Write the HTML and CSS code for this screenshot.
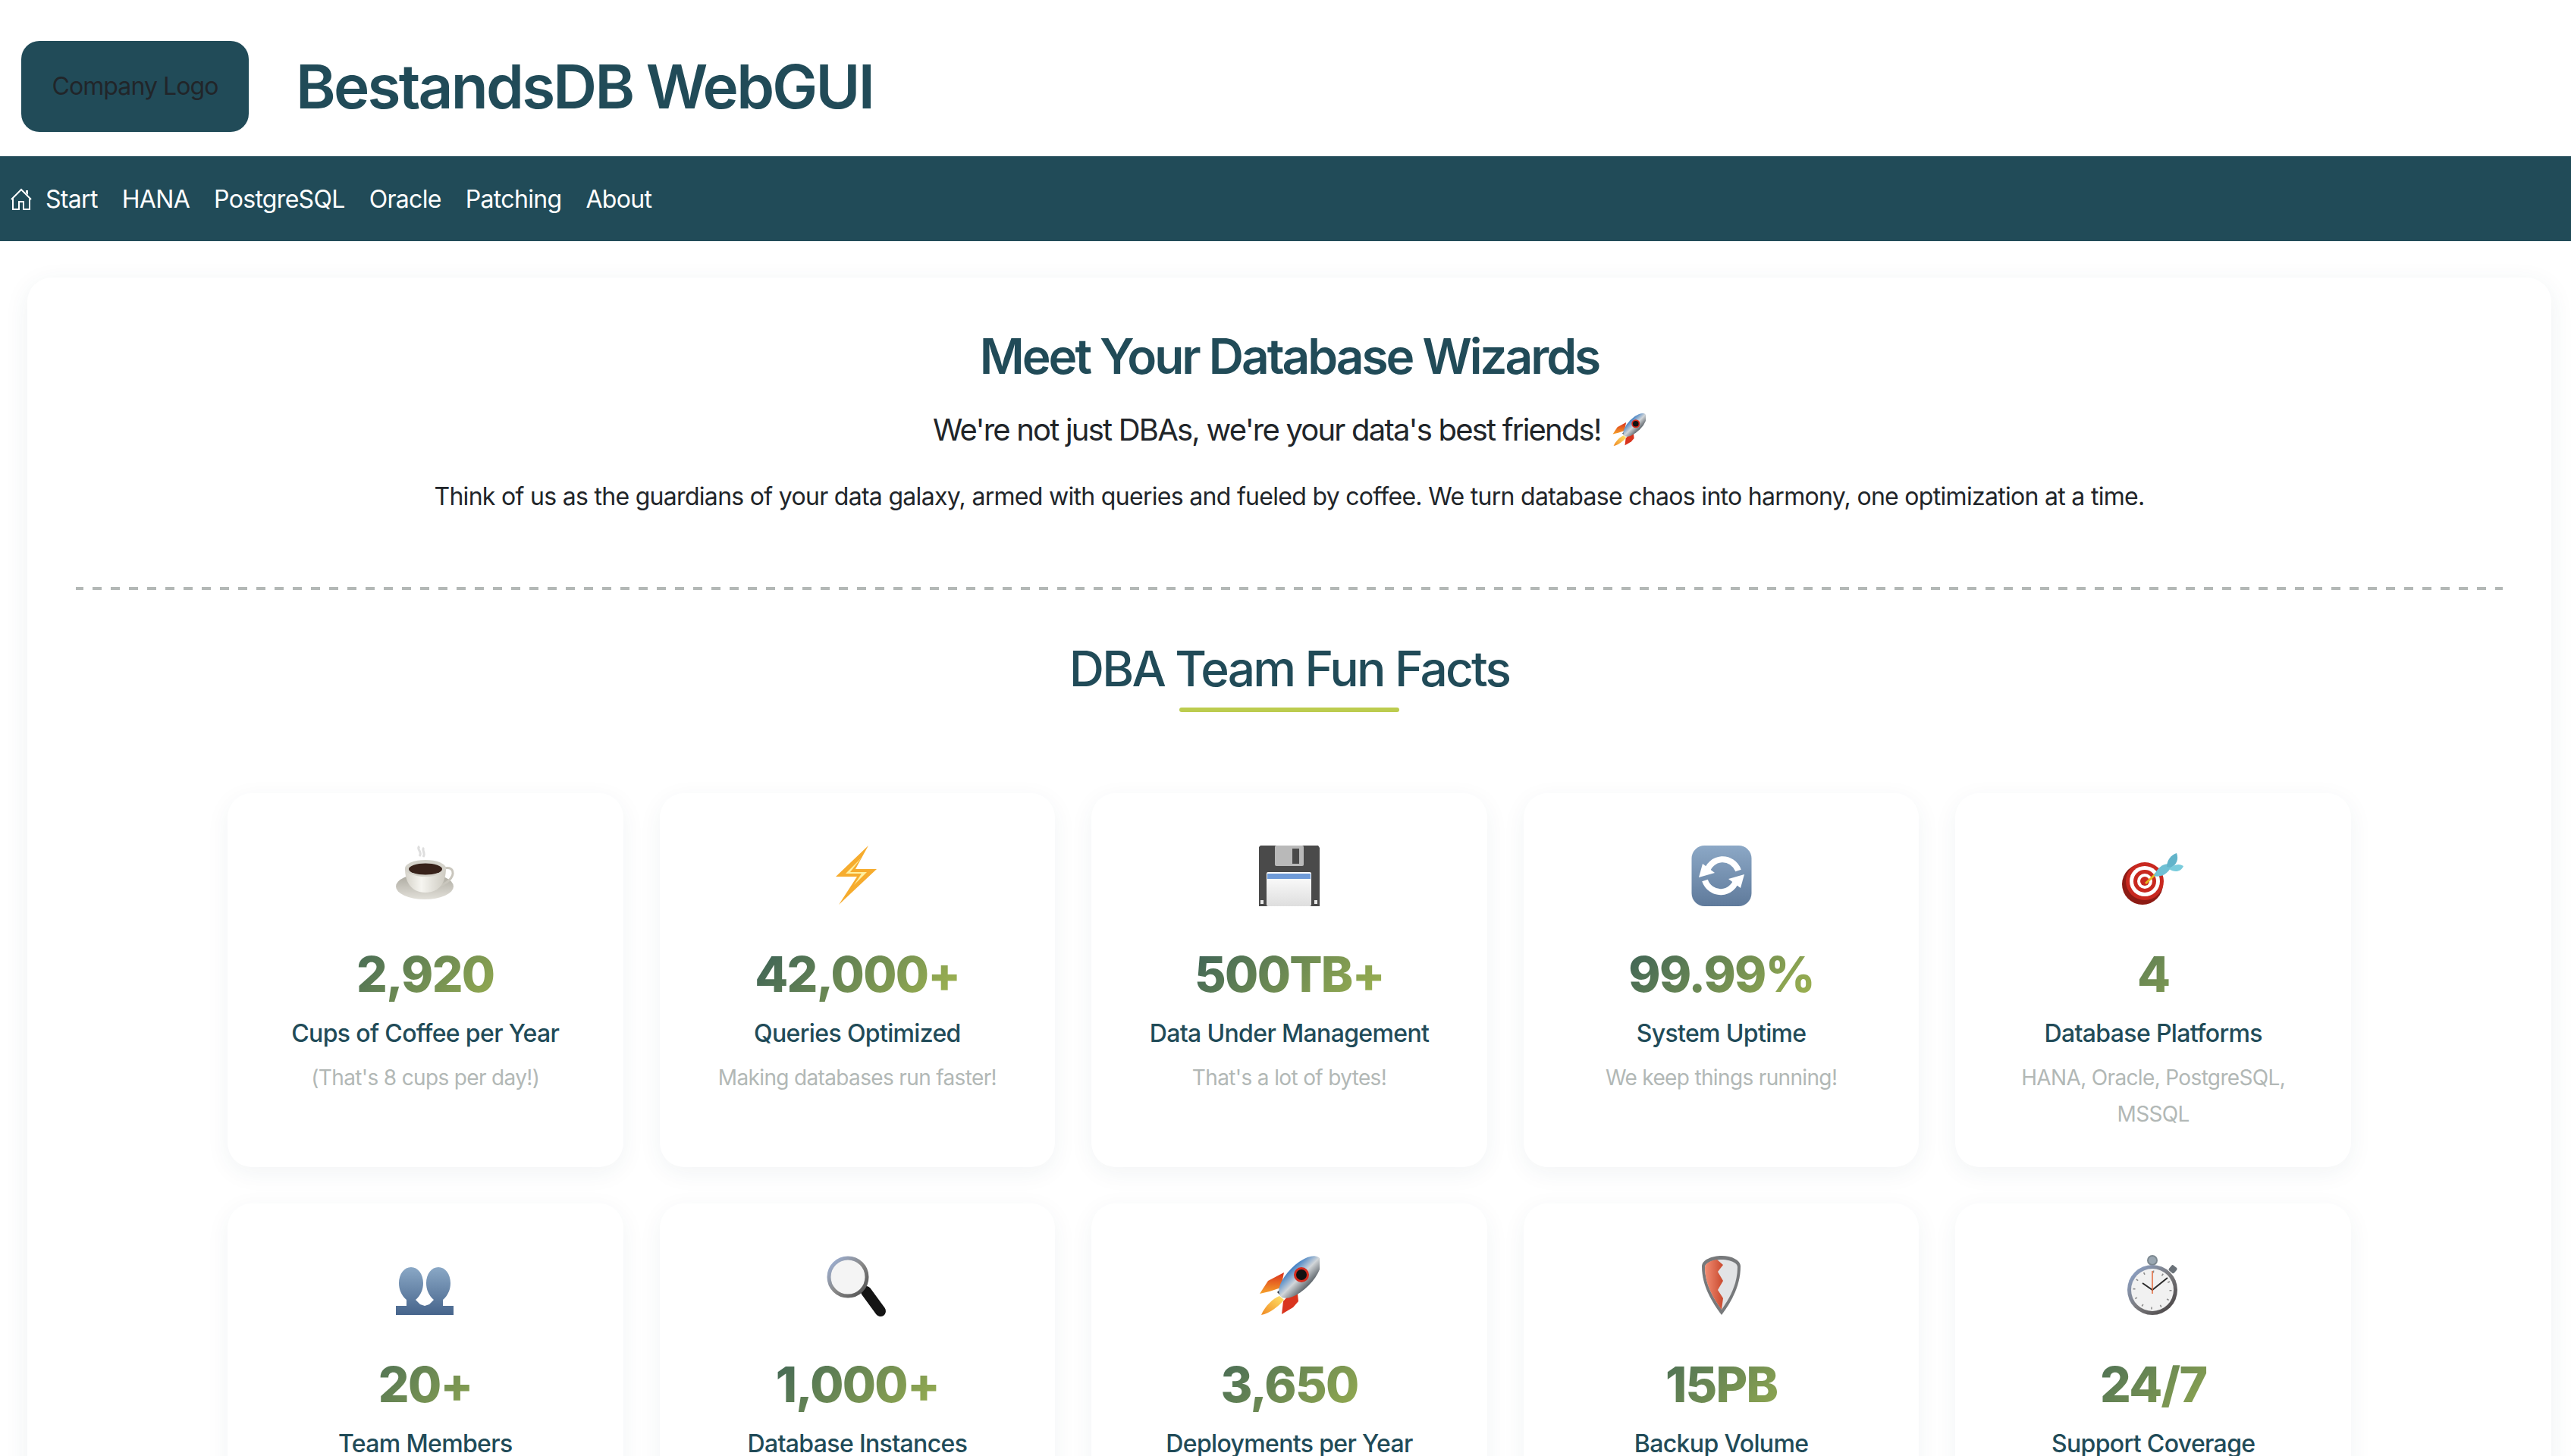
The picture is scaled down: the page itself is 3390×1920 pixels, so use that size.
FILE: index.html
```html
<!DOCTYPE html>
<html lang="en">
<head>
  <meta charset="UTF-8">
  <title>BestandsDB WebGUI</title>
  <link rel="stylesheet" href="styles.css">
</head>
<body>
  <!-- Shared gradients and the rocket, which is used twice -->
  <svg class="sprite" aria-hidden="true">
    <defs>
      <linearGradient id="g-cup" x1="0" y1="0" x2="1" y2="0"><stop offset="0" stop-color="#d6d3ca"/><stop offset=".4" stop-color="#f6f5f0"/><stop offset="1" stop-color="#cdcac1"/></linearGradient>
      <linearGradient id="g-saucer" x1="0" y1="0" x2="0" y2="1"><stop offset="0" stop-color="#a9a69c"/><stop offset="1" stop-color="#e2e0d9"/></linearGradient>
      <linearGradient id="g-floppy-label" x1="0" y1="0" x2="0" y2="1"><stop offset="0" stop-color="#fff"/><stop offset="1" stop-color="#dedede"/></linearGradient>
      <linearGradient id="g-sync" x1="0" y1="0" x2="0" y2="1"><stop offset="0" stop-color="#8ca8c6"/><stop offset="1" stop-color="#5f7a9b"/></linearGradient>
      <linearGradient id="g-people" x1="0" y1="0" x2="0" y2="1"><stop offset="0" stop-color="#8aa8c6"/><stop offset="1" stop-color="#46648b"/></linearGradient>
      <linearGradient id="g-lens" x1="0" y1="0" x2="1" y2="1"><stop offset="0" stop-color="#9fb4dc"/><stop offset=".5" stop-color="#8a8a8a"/><stop offset="1" stop-color="#4c4c4c"/></linearGradient>
      <linearGradient id="g-rocket" x1="0" y1="0" x2="1" y2="0"><stop offset="0" stop-color="#3f7fc4"/><stop offset=".5" stop-color="#d2d6d9"/><stop offset="1" stop-color="#5d646a"/></linearGradient>
      <linearGradient id="g-fin" x1="0" y1="0" x2="0" y2="1"><stop offset="0" stop-color="#d9301c"/><stop offset="1" stop-color="#f6a22a"/></linearGradient>
      <linearGradient id="g-flame" x1="1" y1="0" x2="0" y2="1"><stop offset="0" stop-color="#ffe56a"/><stop offset="1" stop-color="#f08a24"/></linearGradient>
      <linearGradient id="g-shield" x1="0" y1="0" x2="1" y2="0"><stop offset="0" stop-color="#f28e74"/><stop offset="1" stop-color="#c9492e"/></linearGradient>
      <linearGradient id="g-steel" x1="0" y1="0" x2="1" y2="1"><stop offset="0" stop-color="#8fa9d6"/><stop offset=".5" stop-color="#7c7c80"/><stop offset="1" stop-color="#3f3a3a"/></linearGradient>
      <symbol id="rocket" viewBox="0 0 80 80">
        <polygon points="1,50 12,33 33,22 29,42 14,47" fill="url(#g-fin)"/>
        <polygon points="30,77 32,60 50,40 52,60 45,68" fill="#d9341e"/>
        <path d="M27 53 C19 56 8 66 3 78 C14 76 27 66 33 58 Z" fill="url(#g-flame)"/>
        <polygon points="24,48 31,55 36,50 29,43" fill="#2a3138"/>
        <ellipse cx="54" cy="28" rx="16" ry="36" transform="rotate(45 54 28)" fill="url(#g-rocket)"/>
        <circle cx="56" cy="25" r="10" fill="#d52a1c"/>
        <circle cx="56" cy="25" r="7" fill="#111"/>
      </symbol>
    </defs>
  </svg>

  <div class="page">
    <header class="site-header">
      <div class="logo">Company Logo</div>
      <h1>BestandsDB WebGUI</h1>
    </header>

    <nav class="main-nav">
      <a href="#" class="nav-link nav-home">
        <svg class="home-icon" viewBox="0 0 28 30" fill="none" stroke="#fff" stroke-width="2">
          <path d="M1 15 L14 2 L27 15"/>
          <path d="M3 13 V28 H11 V18 H17 V28 H25 V13"/>
          <path d="M20 3 H23 V9 L20 6 Z" fill="#fff" stroke="none"/>
        </svg>
        Start
      </a>
      <a href="#" class="nav-link">HANA</a>
      <a href="#" class="nav-link">PostgreSQL</a>
      <a href="#" class="nav-link">Oracle</a>
      <a href="#" class="nav-link">Patching</a>
      <a href="#" class="nav-link">About</a>
    </nav>

    <main class="content-card">
      <h2>Meet Your Database Wizards</h2>
      <p class="lead">We're not just DBAs, we're your data's best friends! <svg class="lead-rocket"><use href="#rocket"/></svg></p>
      <p class="intro">Think of us as the guardians of your data galaxy, armed with queries and fueled by coffee. We turn database chaos into harmony, one optimization at a time.</p>

      <div class="divider"></div>

      <div class="facts-heading"><h3>DBA Team Fun Facts</h3></div>

      <div class="facts-grid">
        <div class="fact-card">
          <svg class="fact-icon" viewBox="0 0 80 80">
            <path d="M32 1 C27 5 37 8 32 14 M38 3 C34 6 41 9 37 15" fill="none" stroke="#dedede" stroke-width="3"/>
            <ellipse cx="39" cy="54" rx="38" ry="17" fill="url(#g-saucer)"/>
            <path d="M64 30 C78 27 79 38 71 46 C67 50 62 52 58 54" fill="none" stroke="#c9c6bd" stroke-width="3"/>
            <path d="M13 30 C13 48 21 62 40 62 C59 62 67 48 67 30 Z" fill="url(#g-cup)"/>
            <ellipse cx="40" cy="30" rx="27" ry="11" fill="#d4d2ca"/>
            <ellipse cx="40" cy="31" rx="22" ry="7.5" fill="#38221a"/>
          </svg>
          <div class="fact-number">2,920</div>
          <div class="fact-label">Cups of Coffee per Year</div>
          <div class="fact-note">(That's 8 cups per day!)</div>
        </div>

        <div class="fact-card">
          <svg class="fact-icon" viewBox="0 0 80 80">
            <polygon points="55,0 12,41 40,41 16,78 66,31 38,31" fill="#f6ac2e"/>
            <polygon points="46,16 25,37 46,37 36,52 53,35 31,35" fill="#fff0a0"/>
          </svg>
          <div class="fact-number">42,000+</div>
          <div class="fact-label">Queries Optimized</div>
          <div class="fact-note">Making databases run faster!</div>
        </div>

        <div class="fact-card">
          <svg class="fact-icon" viewBox="0 0 80 80">
            <polygon points="0,2 2,0 78,0 80,3 80,80 0,80" fill="#4a4a4a"/>
            <rect x="21" y="0" width="38" height="27" rx="2" fill="#b9b9b9"/>
            <rect x="44" y="4" width="9" height="20" fill="#4a4a4a"/>
            <rect x="10" y="35" width="59" height="45" rx="2" fill="url(#g-floppy-label)"/>
            <rect x="11" y="37" width="57" height="7" fill="#6f9bd8"/>
            <rect x="2" y="72" width="4" height="5" fill="#e8e8e8"/>
            <rect x="73" y="72" width="4" height="5" fill="#e8e8e8"/>
          </svg>
          <div class="fact-number">500TB+</div>
          <div class="fact-label">Data Under Management</div>
          <div class="fact-note">That's a lot of bytes!</div>
        </div>

        <div class="fact-card">
          <svg class="fact-icon" viewBox="0 0 80 80">
            <rect x="0.5" y="0" width="79" height="80" rx="17" fill="url(#g-sync)"/>
            <path d="M62 33 A22 23 0 0 0 20 36" fill="none" stroke="#fff" stroke-width="8"/>
            <polygon points="10,42 15,24 31,36" fill="#fff"/>
            <path d="M18 46 A22 23 0 0 0 60 44" fill="none" stroke="#fff" stroke-width="8"/>
            <polygon points="70,38 65,56 49,44" fill="#fff"/>
          </svg>
          <div class="fact-number">99.99%</div>
          <div class="fact-label">System Uptime</div>
          <div class="fact-note">We keep things running!</div>
        </div>

        <div class="fact-card">
          <svg class="fact-icon" viewBox="0 0 80 80">
            <ellipse cx="26" cy="51" rx="27" ry="27" fill="#8d1b14"/>
            <circle cx="29" cy="47" r="25" fill="#c8281f"/>
            <circle cx="29" cy="47" r="20" fill="#fff"/>
            <circle cx="29" cy="47" r="15" fill="#c8281f"/>
            <circle cx="29" cy="47" r="10" fill="#fff"/>
            <circle cx="29" cy="47" r="6" fill="#c8281f"/>
            <path d="M30 50 L44 37" stroke="#e8b81f" stroke-width="3"/>
            <path d="M41 40 C46 28 55 22 65 25 C62 35 52 43 41 40 Z" fill="#6fc0d4"/>
            <path d="M58 28 C58 19 64 12 71 10 C74 18 71 25 64 29 Z" fill="#62b4ca"/>
            <path d="M61 31 C67 25 74 23 80 27 C77 35 68 36 61 31 Z" fill="#7accdc"/>
          </svg>
          <div class="fact-number">4</div>
          <div class="fact-label">Database Platforms</div>
          <div class="fact-note">HANA, Oracle, PostgreSQL, MSSQL</div>
        </div>

        <div class="fact-card">
          <svg class="fact-icon" viewBox="0 0 80 80">
            <path d="M1 78 V66 H15 V58 C8 52 5 44 5 36 C5 24 12 15 21 15 C30 15 37 24 37 36 C37 44 34 52 27 58 L33 64 L39 66 L45 64 L51 58 C44 52 41 44 41 36 C41 24 48 15 57 15 C66 15 73 24 73 36 C73 44 70 52 63 58 V66 H77 V78 Z" fill="url(#g-people)"/>
          </svg>
          <div class="fact-number">20+</div>
          <div class="fact-label">Team Members</div>
        </div>

        <div class="fact-card">
          <svg class="fact-icon" viewBox="0 0 80 80">
            <path d="M52 47 L71 73" stroke="#141414" stroke-width="14" stroke-linecap="round"/>
            <circle cx="28" cy="28" r="25" fill="#f4f4f4" stroke="url(#g-lens)" stroke-width="5"/>
          </svg>
          <div class="fact-number">1,000+</div>
          <div class="fact-label">Database Instances</div>
        </div>

        <div class="fact-card">
          <svg class="fact-icon"><use href="#rocket"/></svg>
          <div class="fact-number">3,650</div>
          <div class="fact-label">Deployments per Year</div>
        </div>

        <div class="fact-card">
          <svg class="fact-icon" viewBox="0 0 80 80">
            <path d="M40 0 C52 0 65 5 65 14 C65 40 52 62 40 78 C28 62 14 40 14 14 C14 5 28 0 40 0 Z" fill="#77797b"/>
            <path d="M40 5 C50 5 61 9 61 15 C61 38 50 57 40 71 C30 57 18 38 18 15 C18 9 30 5 40 5 Z" fill="#e2e3e5"/>
            <path d="M34 5 C26 6 18 10 18 15 C18 38 30 57 40 71 L42 56 L35 45 L42 33 L35 21 L42 12 Z" fill="url(#g-shield)"/>
          </svg>
          <div class="fact-number">15PB</div>
          <div class="fact-label">Backup Volume</div>
        </div>

        <div class="fact-card">
          <svg class="fact-icon stopwatch" viewBox="0 0 80 80">
            <circle cx="39" cy="6" r="6" fill="#9aa7b2" stroke="#7c8890" stroke-width="2"/>
            <rect x="62" y="13" width="9" height="9" rx="2" transform="rotate(40 66 17)" fill="#6a7178"/>
            <circle cx="39" cy="45" r="33" fill="url(#g-steel)"/>
            <circle cx="39" cy="45" r="28" fill="#f1f1f1"/>
            <circle cx="39" cy="45" r="24" fill="none" stroke="#8c8c8c" stroke-width="3" stroke-dasharray="1.6 10.97"/>
            <path d="M26 36 L39 45 L59 29" fill="none" stroke="#2a2a2a" stroke-width="2"/>
            <path d="M39 20 V50" stroke="#e2673a" stroke-width="1.5"/>
          </svg>
          <div class="fact-number">24/7</div>
          <div class="fact-label">Support Coverage</div>
        </div>
      </div>
    </main>
  </div>
</body>
</html>
```

FILE: styles.css
```css
html, body {
  margin: 0;
  height: 1920px;
  overflow: hidden;
  background: #fff;
}
body {
  font-family: Inter, "Liberation Sans", sans-serif;
  color: #212529;
  line-height: 1.7;
}
.sprite {
  display: block;
  width: 0;
  height: 0;
}
.page {
  width: 3400px;
}

/* Header */
.site-header {
  display: flex;
  align-items: center;
  gap: 62px;
  height: 206px;
  padding: 22px 0 0 28px;
  box-sizing: border-box;
}
.logo {
  display: flex;
  align-items: center;
  justify-content: center;
  width: 300px;
  height: 120px;
  border-radius: 24px;
  background: #214b58;
  color: #212529;
  font-size: 32px;
  letter-spacing: -0.9px;
}
.site-header h1 {
  margin: 0;
  color: #214b58;
  font-size: 80px;
  font-weight: 600;
  line-height: 1.2;
  letter-spacing: -2.75px;
}

/* Nav */
.main-nav {
  display: flex;
  align-items: center;
  height: 112px;
  box-sizing: border-box;
  padding-top: 2px;
  background: #214b58;
}
.nav-link {
  display: flex;
  align-items: center;
  padding: 0 16px;
  color: #fff;
  font-size: 32px;
  letter-spacing: -0.68px;
  text-decoration: none;
}
.nav-home {
  padding-left: 14px;
}
.home-icon {
  width: 28px;
  height: 30px;
  margin-right: 18px;
}

/* Main card */
.content-card {
  margin: 48px 36px 0;
  padding: 66px 64px 64px;
  background: #fff;
  border-radius: 32px;
  box-shadow: 0 8px 32px rgba(33, 75, 88, 0.08);
}
.content-card h2 {
  margin: 0;
  color: #214b58;
  font-size: 64px;
  font-weight: 600;
  line-height: 1.2;
  letter-spacing: -3.05px;
  text-align: center;
}
.lead {
  margin: 24px 0 0;
  font-size: 40px;
  letter-spacing: -1.8px;
  text-align: center;
}
.lead-rocket {
  width: 44px;
  height: 44px;
  margin-left: 6px;
  vertical-align: -8px;
}
.intro {
  margin: 27px 0 0;
  font-size: 32px;
  letter-spacing: -0.7px;
  text-align: center;
}
.divider {
  height: 4px;
  margin-top: 92px;
  background: repeating-linear-gradient(90deg, #b3b8b6 0 12px, transparent 12px 24px) -2px 0;
}
.facts-heading {
  margin-top: 66px;
  text-align: center;
}
.facts-heading h3 {
  display: inline-block;
  position: relative;
  margin: 0;
  color: #214b58;
  font-size: 64px;
  font-weight: 500;
  line-height: 1.2;
  letter-spacing: -2.8px;
}
.facts-heading h3::after {
  content: "";
  position: absolute;
  left: 25%;
  bottom: -18px;
  width: 50%;
  height: 6px;
  border-radius: 3px;
  background: #bccc4e;
}

/* Fact cards */
.facts-grid {
  display: grid;
  grid-template-columns: repeat(5, 1fr);
  gap: 48px;
  width: 2800px;
  margin: 125px auto 0;
}
.fact-card {
  padding: 69px 48px 46px;
  background: #fff;
  border-radius: 32px;
  box-shadow: 0 8px 32px rgba(33, 75, 88, 0.06);
  text-align: center;
}
.fact-icon {
  display: block;
  width: 80px;
  height: 80px;
  margin: 0 auto;
  overflow: visible;
}
.fact-number {
  margin-top: 52px;
  background: linear-gradient(135deg, #214b58, #bccc4e);
  -webkit-background-clip: text;
  background-clip: text;
  color: transparent;
  font-size: 64px;
  font-weight: 800;
  line-height: 1.2;
  letter-spacing: -1.7px;
}
.fact-label {
  margin-top: 12px;
  color: #214b58;
  font-size: 32px;
  font-weight: 500;
  letter-spacing: -0.65px;
}
.fact-note {
  margin-top: 8px;
  color: #b2b8b6;
  font-size: 28px;
  letter-spacing: -0.65px;
}
```
